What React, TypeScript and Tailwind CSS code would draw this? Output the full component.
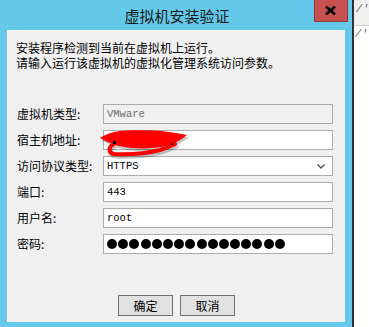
const cjk = "font-['Noto_Sans_CJK_SC','Noto_Sans',sans-serif]";
const mono = "font-['Liberation_Mono',monospace]";

function Field({ label, children }: { label: string; children: React.ReactNode }) {
  return (
    <div className="flex h-[20px] items-center">
      <div className={`w-[95px] pl-[9px] text-[12px] leading-none text-black ${cjk}`}>{label}</div>
      {children}
    </div>
  );
}

function Box({ children, className = "" }: { children?: React.ReactNode; className?: string }) {
  return (
    <div
      className={`flex h-[20px] w-[230px] items-center border border-[#ababab] pl-[3px] text-[10.5px] leading-none ${mono} ${className}`}
    >
      {children}
    </div>
  );
}

// red marker scribble hiding the host address
function Scribble() {
  const blob =
    "M0 8 C8 3 16 1 26 0.5 C36 0 46 0 56 0.5 C66 1 76 3 87 5 C81 10 75 13 67 16 C56 18 44 19 32 18 C20 17 10 14 0 8 Z";
  const loop = "M14 14 C8 17 8 23 14 24 C30 25 48 23 60 20 C67 18 71 16 75 14";
  return (
    <svg className="absolute left-[92px] top-[99px] h-[30px] w-[96px]" viewBox="0 0 96 30">
      <g transform="translate(1.5 2.5)" opacity="0.22">
        <path d={blob} fill="#000" />
        <path d={loop} fill="none" stroke="#000" strokeWidth="4" strokeLinecap="round" />
      </g>
      <path d={blob} fill="#ff0000" />
      <path d={loop} fill="none" stroke="#ff0000" strokeWidth="4" strokeLinecap="round" />
      <rect x="13" y="11" width="3" height="3" fill="#000" />
      <rect x="71" y="13" width="2" height="2" fill="#000" />
    </svg>
  );
}

export default function App() {
  return (
    <div className="flex h-[327px] w-[369px] overflow-hidden bg-white">
      <div className="flex h-full w-[357px] flex-col bg-[#64c9e9]">
        <div className="relative flex h-[30px] items-center justify-center">
          <span className={`pl-[2px] text-[15px] leading-none text-[#1a1a1a] ${cjk}`}>虚拟机安装验证</span>
          <button className="absolute right-[4px] top-0 flex h-[22px] w-[34px] items-center justify-center border border-t-0 border-[#8c3b35] bg-[#c75050]">
            <svg width="11" height="9" viewBox="0 0 11 9">
              <path d="M1 0.5 L10 8.5 M10 0.5 L1 8.5" stroke="#000" strokeWidth="2.6" />
            </svg>
          </button>
        </div>
        <div className="relative mx-[7px] flex h-[292px] flex-col border-l border-t border-[#f8f8f8] bg-[#f0f0f0]">
          <div className={`pl-[8px] pt-[9px] text-[12px] leading-[15px] text-black ${cjk}`}>
            <p className="h-[15px]">安装程序检测到当前在虚拟机上运行。</p>
            <p className="h-[15px]">请输入运行该虚拟机的虚拟化管理系统访问参数。</p>
          </div>
          <div className="mt-[34px] flex flex-col gap-[6px]">
            <Field label="虚拟机类型:">
              <Box className="bg-[#f0f0f0] text-[#6d6d6d]">VMware</Box>
            </Field>
            <Field label="宿主机地址:">
              <Box className="bg-white text-black" />
            </Field>
            <Field label="访问协议类型:">
              <Box className="justify-between bg-white pr-[7px] text-black">
                <span>HTTPS</span>
                <svg width="8" height="5" viewBox="0 0 8 5">
                  <path d="M0.5 0.5 L4 4 L7.5 0.5" fill="none" stroke="#555" strokeWidth="1.4" />
                </svg>
              </Box>
            </Field>
            <Field label="端口:">
              <Box className="bg-white text-black">443</Box>
            </Field>
            <Field label="用户名:">
              <Box className="bg-white text-black">root</Box>
            </Field>
            <Field label="密码:">
              <Box className="gap-[1.2px] bg-white">
                {Array.from({ length: 16 }).map((_, i) => (
                  <span key={i} className="h-[10px] w-[10px] rounded-full bg-black" />
                ))}
              </Box>
            </Field>
          </div>
          <div className="mt-auto mb-[6px] flex justify-center gap-[7px]">
            <button className={`h-[21px] w-[55px] border border-[#707070] bg-[#e1e1e1] text-[12px] leading-none text-black ${cjk}`}>确定</button>
            <button className={`h-[21px] w-[55px] border border-[#707070] bg-[#e1e1e1] text-[12px] leading-none text-black ${cjk}`}>取消</button>
          </div>
          <Scribble />
        </div>
        <div className="flex-1" />
      </div>
      <div className="h-full w-[2px] bg-[#2f2f3c]" />
      <div className={`flex flex-1 flex-col text-[11px] italic text-[#666] ${mono}`}>
        <div className="h-[25px] bg-[#f0f0f0] pl-[2px] pt-[4px] leading-none">/'</div>
        <div className="h-[1px] bg-[#d0d0d0]" />
        <div className="pl-[1px] pt-[3px] leading-none">/'</div>
      </div>
    </div>
  );
}
